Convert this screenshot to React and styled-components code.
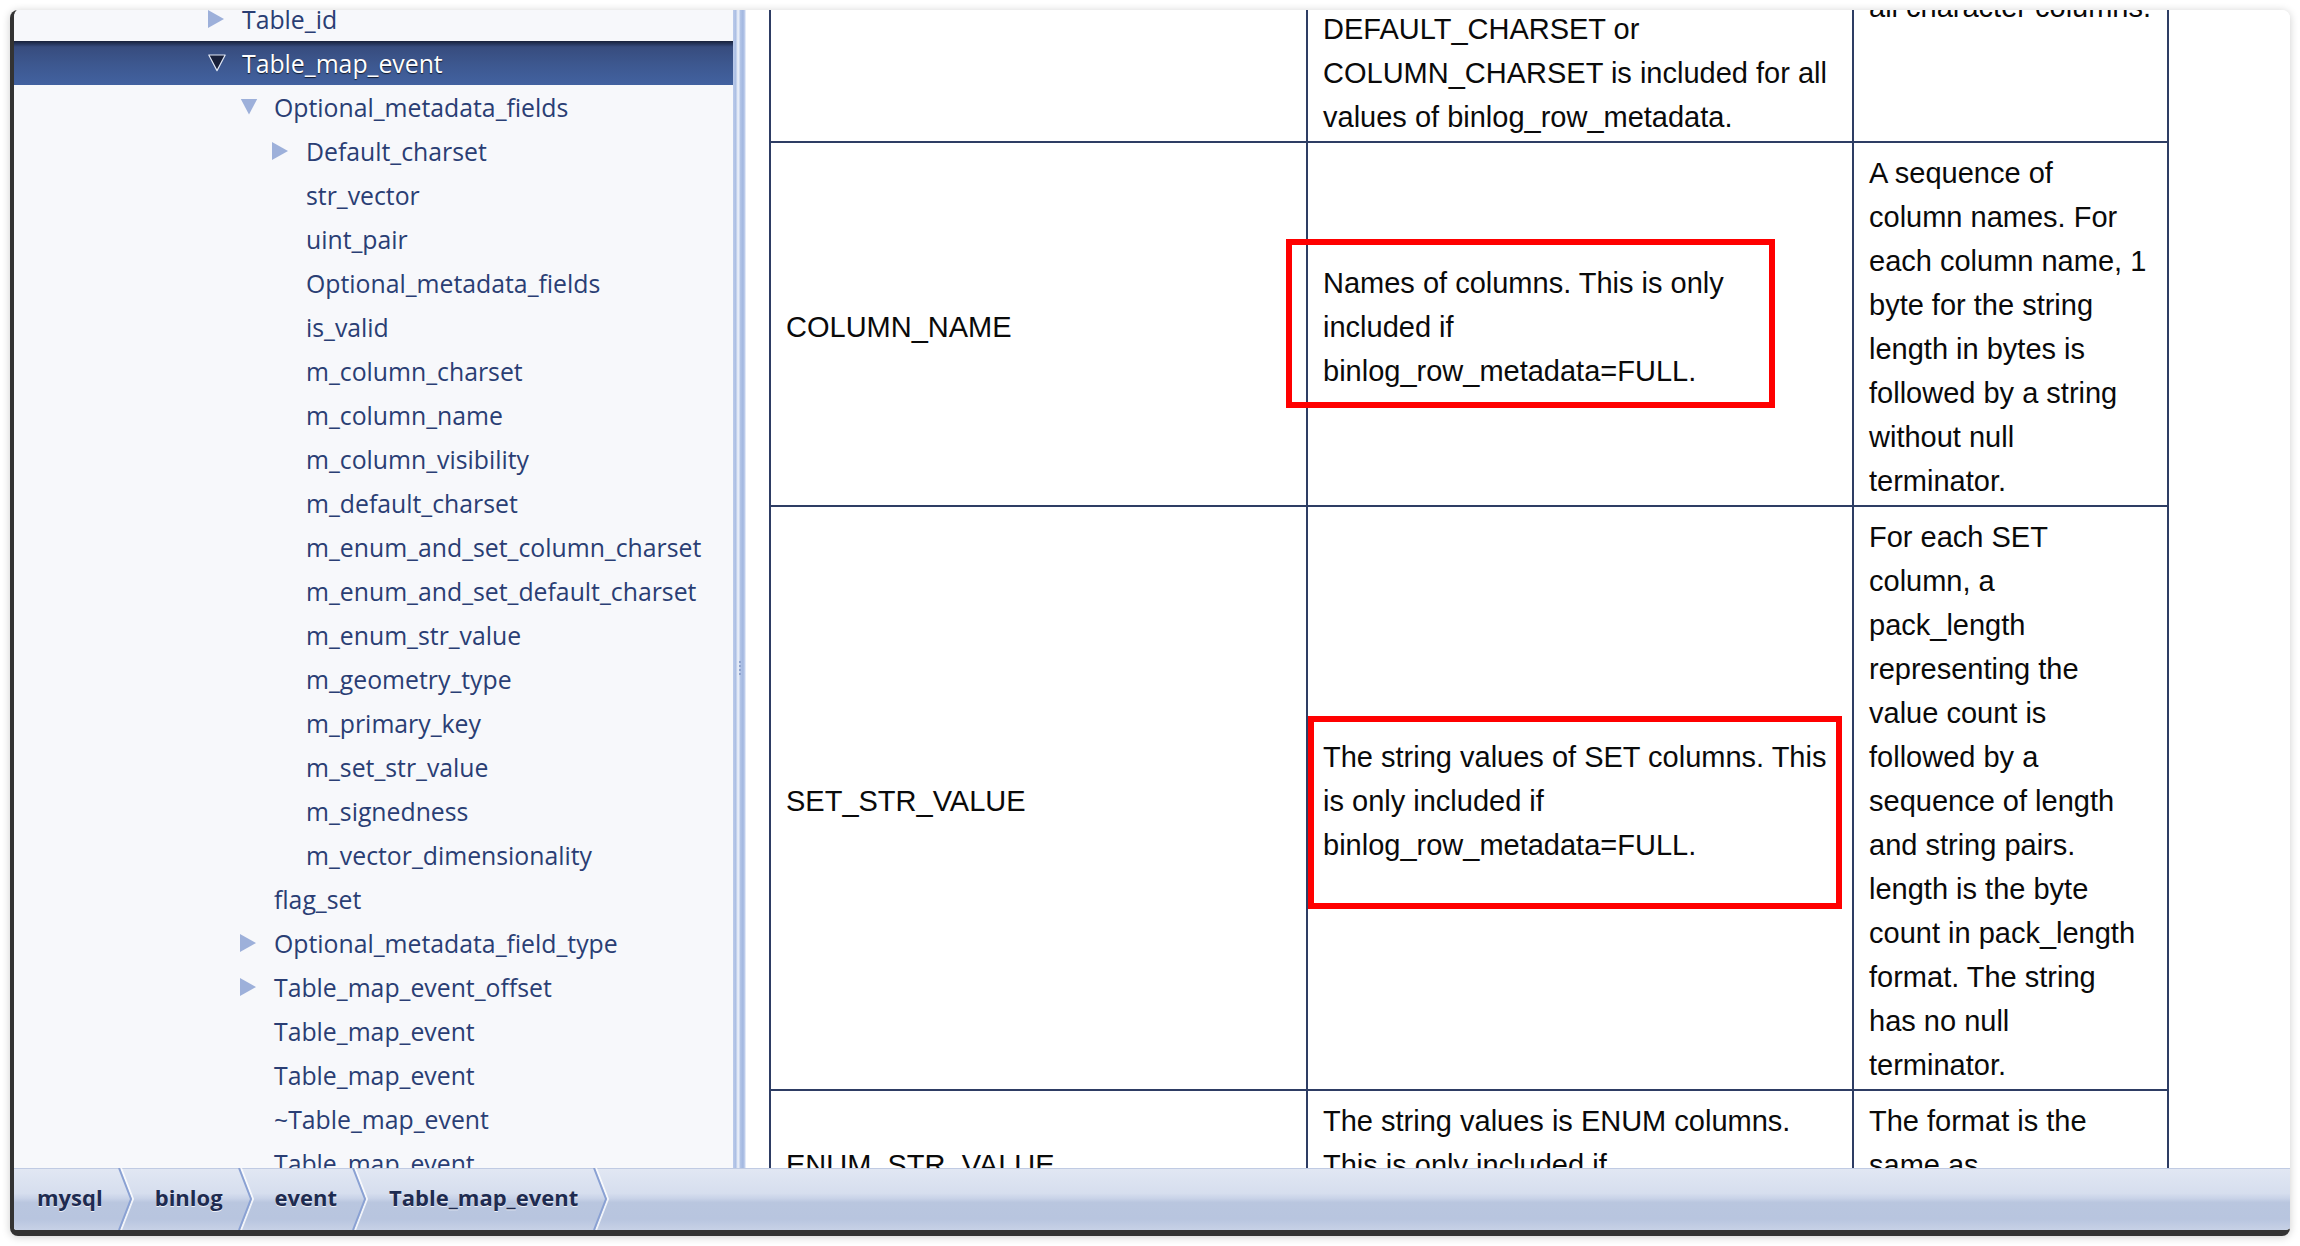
import React from "react";
import styled, { createGlobalStyle } from "styled-components";

const GlobalStyle = createGlobalStyle`
  html, body {
    margin: 0;
    padding: 0;
    background: #ffffff;
  }
  body {
    font-family: "Open Sans", "Noto Sans", sans-serif;
  }
`;

const treeItems = [
  { label: "Table_id", level: 0, arrow: "right" },
  { label: "Table_map_event", level: 0, arrow: "down", selected: true },
  { label: "Optional_metadata_fields", level: 1, arrow: "down" },
  { label: "Default_charset", level: 2, arrow: "right" },
  { label: "str_vector", level: 2 },
  { label: "uint_pair", level: 2 },
  { label: "Optional_metadata_fields", level: 2 },
  { label: "is_valid", level: 2 },
  { label: "m_column_charset", level: 2 },
  { label: "m_column_name", level: 2 },
  { label: "m_column_visibility", level: 2 },
  { label: "m_default_charset", level: 2 },
  { label: "m_enum_and_set_column_charset", level: 2 },
  { label: "m_enum_and_set_default_charset", level: 2 },
  { label: "m_enum_str_value", level: 2 },
  { label: "m_geometry_type", level: 2 },
  { label: "m_primary_key", level: 2 },
  { label: "m_set_str_value", level: 2 },
  { label: "m_signedness", level: 2 },
  { label: "m_vector_dimensionality", level: 2 },
  { label: "flag_set", level: 1 },
  { label: "Optional_metadata_field_type", level: 1, arrow: "right" },
  { label: "Table_map_event_offset", level: 1, arrow: "right" },
  { label: "Table_map_event", level: 1 },
  { label: "Table_map_event", level: 1 },
  { label: "~Table_map_event", level: 1 },
  { label: "Table_map_event", level: 1 },
];

const rows = [
  {
    name: "COLUMN_CHARSET",
    desc: [
      "Charsets of character columns. It has",
      "a default charset for the case that",
      "most of character columns have the",
      "same charset and the most used",
      "charset is binded to default charset.",
      "Collation numbers are binded to",
      "charsets one by one. Either",
      "DEFAULT_CHARSET or",
      "COLUMN_CHARSET is included for all",
      "values of binlog_row_metadata.",
    ],
    format: [
      "A sequence of",
      "collation numbers.",
      "The column index is",
      "counted only in",
      "all character columns.",
    ],
  },
  {
    name: "COLUMN_NAME",
    desc: ["Names of columns. This is only", "included if", "binlog_row_metadata=FULL."],
    format: [
      "A sequence of",
      "column names. For",
      "each column name, 1",
      "byte for the string",
      "length in bytes is",
      "followed by a string",
      "without null",
      "terminator.",
    ],
    highlight: { left: -22, top: 96, width: 489, height: 169 },
  },
  {
    name: "SET_STR_VALUE",
    desc: [
      "The string values of SET columns. This",
      "is only included if",
      "binlog_row_metadata=FULL.",
    ],
    format: [
      "For each SET",
      "column, a",
      "pack_length",
      "representing the",
      "value count is",
      "followed by a",
      "sequence of length",
      "and string pairs.",
      "length is the byte",
      "count in pack_length",
      "format. The string",
      "has no null",
      "terminator.",
    ],
    highlight: { left: 0, top: 209, width: 534, height: 193 },
  },
  {
    name: "ENUM_STR_VALUE",
    desc: [
      "The string values is ENUM columns.",
      "This is only included if",
      "binlog_row_metadata=FULL.",
    ],
    format: ["The format is the", "same as", "SET_STR_VALUE."],
  },
];

const crumbs = ["mysql", "binlog", "event", "Table_map_event"];

function Toggle({ dir, selected }) {
  return (
    <ArrowSlot>
      {dir === "right" && (
        <svg width="18" height="18" viewBox="0 0 18 18">
          <polygon points="0,0 16,9 0,18" fill="#9db0da" />
        </svg>
      )}
      {dir === "down" && (
        <svg width="18" height="18" viewBox="0 0 18 18">
          <polygon
            points="0.8,1 17.2,1 9,16.6"
            fill={selected ? "#18203a" : "#9db0da"}
            stroke={selected ? "#dfe6f4" : "none"}
            strokeWidth="1.2"
            strokeLinejoin="round"
          />
        </svg>
      )}
    </ArrowSlot>
  );
}

function Chevron() {
  return (
    <Sep>
      <svg width="18" height="62" viewBox="0 0 18 62">
        <polyline points="4,0 16,31 4,62" fill="none" stroke="#ffffff" strokeWidth="2" opacity="0.8" />
        <polyline points="2,0 14,31 2,62" fill="none" stroke="#8aa1d3" strokeWidth="2" />
      </svg>
    </Sep>
  );
}

export default function App() {
  return (
    <Page>
      <GlobalStyle />
      <Window>
        <Main>
          <Sidebar>
            <TreeList>
              {treeItems.map((item, i) => (
                <TreeRow key={i} $level={item.level} $selected={item.selected}>
                  <Toggle dir={item.arrow} selected={item.selected} />
                  <TreeLabel $selected={item.selected}>{item.label}</TreeLabel>
                </TreeRow>
              ))}
            </TreeList>
          </Sidebar>
          <Splitter>
            <Grip />
          </Splitter>
          <Content>
            <DocTable>
              <colgroup>
                <Col $w={537} />
                <Col $w={546} />
                <Col $w={315} />
              </colgroup>
              <tbody>
                {rows.map((row) => (
                  <tr key={row.name}>
                    <Cell>{row.name}</Cell>
                    <Cell>
                      {row.desc.map((line, i) => (
                        <Line key={i}>{line}</Line>
                      ))}
                      {row.highlight && (
                        <Highlight
                          $left={row.highlight.left}
                          $top={row.highlight.top}
                          $w={row.highlight.width}
                          $h={row.highlight.height}
                        />
                      )}
                    </Cell>
                    <Cell>
                      {row.format.map((line, i) => (
                        <Line key={i}>{line}</Line>
                      ))}
                    </Cell>
                  </tr>
                ))}
              </tbody>
            </DocTable>
          </Content>
        </Main>
        <Breadcrumb>
          {crumbs.map((c) => (
            <React.Fragment key={c}>
              <Crumb>{c}</Crumb>
              <Chevron />
            </React.Fragment>
          ))}
        </Breadcrumb>
      </Window>
    </Page>
  );
}

const Page = styled.div`
  padding: 10px;
  height: 1246px;
  box-sizing: border-box;
  background: #ffffff;
`;

const Window = styled.div`
  width: 2280px;
  height: 1226px;
  box-sizing: border-box;
  border-left: 4px solid #333333;
  border-bottom: 6px solid #333333;
  border-radius: 8px;
  overflow: hidden;
  display: flex;
  flex-direction: column;
  background: #ffffff;
  box-shadow: 0 1px 9px rgba(0, 0, 0, 0.2);
`;

const Main = styled.div`
  display: flex;
  height: 1158px;
  flex: none;
`;

const Sidebar = styled.div`
  width: 719px;
  flex: none;
  background: #f7f8fb;
  overflow: hidden;
`;

const TreeList = styled.ul`
  list-style: none;
  margin: -13px 0 0;
  padding: 0;
`;

const TreeRow = styled.li`
  height: 44px;
  display: flex;
  align-items: center;
  padding-left: ${(p) => 194 + p.$level * 32}px;
  background: ${(p) =>
    p.$selected
      ? "linear-gradient(to bottom, #18213a 0px, #26365d 3px, #374c7e 6px, #3d5890 55%, #4262a0 100%)"
      : "transparent"};
`;

const ArrowSlot = styled.span`
  width: 34px;
  flex: none;
  display: flex;
  align-items: center;
`;

const TreeLabel = styled.span`
  font-size: 24.8px;
  color: ${(p) => (p.$selected ? "#ffffff" : "#2a3e74")};
  text-shadow: ${(p) => (p.$selected ? "0 1px 1px rgba(0,0,0,0.7)" : "none")};
  white-space: nowrap;
`;

const Splitter = styled.div`
  width: 15px;
  flex: none;
  display: flex;
  justify-content: center;
  align-items: flex-start;
  padding-top: 650px;
  box-sizing: border-box;
  background: linear-gradient(
    to right,
    #bccbea 0px,
    #a9bde3 3px,
    #dfe6f4 4px,
    #e9eef8 6px,
    #b4c6e8 7px,
    #a2b7e0 10px,
    #c6d3ee 12px,
    #ffffff 13px
  );
`;

const Grip = styled.div`
  width: 4px;
  height: 16px;
  margin-left: -2px;
  background-image: radial-gradient(circle, #8ea3cf 45%, transparent 50%);
  background-size: 4px 4px;
`;

const Content = styled.div`
  flex: 1;
  min-width: 0;
  background: #ffffff;
  overflow: hidden;
`;

const DocTable = styled.table`
  border-collapse: collapse;
  table-layout: fixed;
  width: 1400px;
  margin: -321px 0 0 21px;
  font-family: "Liberation Sans", Arial, sans-serif;
  font-size: 29px;
  color: #0a0a0a;
`;

const Col = styled.col`
  width: ${(p) => p.$w}px;
`;

const Cell = styled.td`
  position: relative;
  border: 2px solid #2e3d64;
  padding: 8px 15px 2px;
  line-height: 44px;
  vertical-align: middle;
  white-space: nowrap;
`;

const Line = styled.span`
  display: block;
`;

const Highlight = styled.div`
  position: absolute;
  left: ${(p) => p.$left}px;
  top: ${(p) => p.$top}px;
  width: ${(p) => p.$w}px;
  height: ${(p) => p.$h}px;
  box-sizing: border-box;
  border: 6px solid #ff0000;
  pointer-events: none;
`;

const Breadcrumb = styled.div`
  height: 62px;
  flex: none;
  display: flex;
  align-items: stretch;
  padding-left: 23px;
  box-sizing: border-box;
  border-top: 1px solid #c0cbe3;
  background: linear-gradient(
    to bottom,
    #e1e7f3 0%,
    #d6deee 40%,
    #c9d3e8 48%,
    #b9c6df 55%,
    #b8c5df 82%,
    #c7d1e6 100%
  );
`;

const Crumb = styled.span`
  display: flex;
  align-items: center;
  padding-bottom: 5px;
  font-size: 22px;
  font-weight: 700;
  color: #1e2b50;
  text-shadow: 0 1px 0 rgba(255, 255, 255, 0.75);
  white-space: nowrap;
`;

const Sep = styled.span`
  display: flex;
  align-items: center;
  margin: -1px 20px 0 14px;
`;
